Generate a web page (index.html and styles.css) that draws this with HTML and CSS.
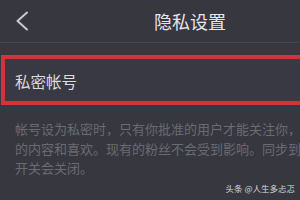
FILE: index.html
```html
<!DOCTYPE html>
<html>
<head>
<meta charset="utf-8">
<link rel="stylesheet" href="styles.css">
</head>
<body>
<div class="page">
  <header class="topbar">
    <svg class="back" width="14" height="20" viewBox="0 0 14 20">
      <polyline points="12,1.5 2.5,10 12,18.5" fill="none" stroke="#c9cacd" stroke-width="2" stroke-linecap="round" stroke-linejoin="round"/>
    </svg>
    <div class="title">隐私设置</div>
  </header>
  <div class="row">
    <span class="row-label">私密帐号</span>
  </div>
  <p class="desc">帐号设为私密时，只有你批准的用户才能关注你，并查看<br>的内容和喜欢。现有的粉丝不会受到影响。同步到其他<br>开关会关闭。</p>
  <div class="mark">头条 @人生多忐忑</div>
</div>
</body>
</html>
```
FILE: styles.css
```css
html, body {
  margin: 0;
  padding: 0;
  background: #36373f;
  overflow: hidden;
}
.page {
  position: relative;
  width: 300px;
  height: 200px;
  overflow: hidden;
  font-family: "Noto Sans CJK SC", "Noto Sans", sans-serif;
}
.topbar {
  display: flex;
  align-items: center;
  padding-left: 15px;
  border-bottom: 1px solid #45464d;
  box-sizing: border-box;
  height: 43px;
}
.back {
  display: block;
  margin-top: -1px;
}
.title {
  margin-left: 125px;
  color: #e6e6e8;
  font-size: 18px;
  margin-top: -1px;
}
.row {
  margin-top: 12px;
  margin-left: 1px;
  width: 320px;
  height: 50px;
  box-sizing: border-box;
  border: 4px solid #d1353a;
  background: #383943;
  display: flex;
  align-items: center;
  padding-left: 10px;
}
.row-label {
  color: #dcdcde;
  font-size: 15.5px;
  margin-top: 2px;
}
.desc {
  margin: 14px 0 0 15px;
  white-space: nowrap;
  color: #6a6b72;
  font-size: 13px;
  line-height: 19.5px;
}
.mark {
  position: absolute;
  right: 5px;
  bottom: 6px;
  color: #d8d8da;
  font-size: 8.5px;
  line-height: 12px;
}
```
